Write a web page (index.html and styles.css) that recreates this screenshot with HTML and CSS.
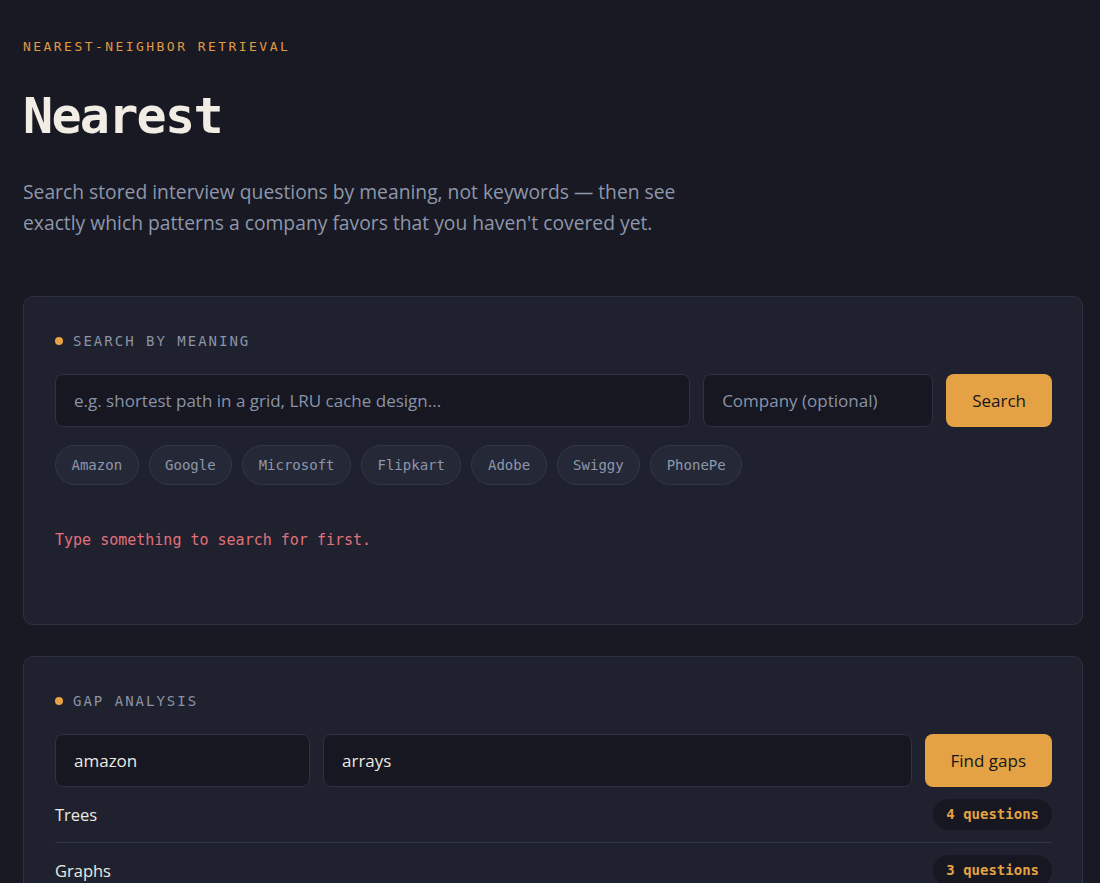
FILE: index.html
```html
<!DOCTYPE html>
<html lang="en">
<head>
    <meta charset="UTF-8">
    <meta name="viewport" content="width=device-width, initial-scale=1.0">
    <title>Nearest</title>
    <link rel="stylesheet" href="styles.css">
</head>
<body>

    <div class="page">
        <header class="hero">
            <p class="eyebrow">NEAREST-NEIGHBOR RETRIEVAL</p>
            <h1 class="title">Nearest</h1>
            <p class="lead">Search stored interview questions by meaning, not keywords — then see exactly which patterns a company favors that you haven't covered yet.</p>
        </header>

        <!-- Semantic search -->
        <section class="card">
            <h2 class="card-title"><span class="dot"></span>SEARCH BY MEANING</h2>
            <div class="search-row">
                <input type="text" class="field" placeholder="e.g. shortest path in a grid, LRU cache design...">
                <input type="text" class="field" placeholder="Company (optional)">
                <button class="btn">Search</button>
            </div>
            <div class="chips">
                <button class="chip">Amazon</button>
                <button class="chip">Google</button>
                <button class="chip">Microsoft</button>
                <button class="chip">Flipkart</button>
                <button class="chip">Adobe</button>
                <button class="chip">Swiggy</button>
                <button class="chip">PhonePe</button>
            </div>
            <div class="results">
                <p class="error">Type something to search for first.</p>
            </div>
        </section>

        <!-- Gap analysis -->
        <section class="card">
            <h2 class="card-title"><span class="dot"></span>GAP ANALYSIS</h2>
            <div class="gap-row">
                <input type="text" class="field" value="amazon">
                <input type="text" class="field" value="arrays">
                <button class="btn">Find gaps</button>
            </div>
            <ul class="gap-list">
                <li class="gap-item"><span>Trees</span><span class="count">4 questions</span></li>
                <li class="gap-item"><span>Graphs</span><span class="count">3 questions</span></li>
                <li class="gap-item"><span>Dynamic Programming</span><span class="count">3 questions</span></li>
            </ul>
        </section>
    </div>

</body>
</html>
```

FILE: styles.css
```css
body {
    margin: 0;
    padding: 0;
    background-color: #181922;
    color: #ece9e2;
    font-family: "Segoe UI", "Open Sans", sans-serif;
}

.page {
    padding: 37px 17px 40px 23px;
}

.eyebrow {
    margin: 0;
    font-family: "DejaVu Sans Mono", monospace;
    font-size: 13px;
    line-height: 20px;
    letter-spacing: 2.45px;
    color: #e09a45;
}

.title {
    margin: 29px 0 0;
    font-family: "DejaVu Sans Mono", monospace;
    font-size: 50px;
    line-height: 60px;
    letter-spacing: -1.7px;
    font-weight: bold;
    color: #f1ede4;
}

.lead {
    margin: 30px 0 0;
    max-width: 680px;
    font-size: 19.3px;
    line-height: 31px;
    color: #8e97ab;
}

.card {
    margin-top: 58px;
    padding: 34px 30px 31px 31px;
    background-color: #1f222e;
    border: 1px solid #2d3243;
    border-radius: 10px;
}

.card + .card {
    margin-top: 31px;
}

.card-title {
    display: flex;
    align-items: center;
    gap: 10px;
    margin: 0 0 23px;
    font-family: "DejaVu Sans Mono", monospace;
    font-size: 14px;
    line-height: 20px;
    font-weight: normal;
    letter-spacing: 2px;
    color: #8b93a7;
}

.dot {
    width: 8px;
    height: 8px;
    border-radius: 50%;
    background-color: #e8a444;
}

.search-row {
    display: grid;
    grid-template-columns: 1fr 230px auto;
    gap: 13px;
}

.gap-row {
    display: grid;
    grid-template-columns: 255px 1fr auto;
    gap: 13px;
}

.field {
    height: 53px;
    box-sizing: border-box;
    padding: 0 18px;
    background-color: #161720;
    border: 1px solid #2d3243;
    border-radius: 8px;
    font-family: inherit;
    font-size: 17px;
    color: #ece9e2;
    outline: none;
}

.field::placeholder {
    color: #8a93a8;
}

.btn {
    height: 53px;
    padding: 0 26px;
    background-color: #e5a244;
    color: #16161c;
    border: none;
    border-radius: 8px;
    font-family: inherit;
    font-size: 17px;
    cursor: pointer;
}

.chips {
    display: flex;
    flex-wrap: wrap;
    gap: 10px;
    margin-top: 18px;
}

.chip {
    height: 40px;
    padding: 0 15.5px;
    background-color: #252937;
    border: 1px solid #323748;
    border-radius: 20px;
    font-family: "DejaVu Sans Mono", monospace;
    font-size: 14px;
    color: #8d96aa;
    cursor: pointer;
}

.results {
    margin-top: 45px;
    min-height: 63px;
}

.error {
    margin: 0;
    font-family: "DejaVu Sans Mono", monospace;
    font-size: 15px;
    line-height: 20px;
    color: #e0707b;
}

.gap-list {
    list-style: none;
    margin: 0;
    padding: 0;
}

.gap-item {
    display: flex;
    justify-content: space-between;
    align-items: center;
    padding: 12px 0;
    border-bottom: 1px solid #30354a;
    font-size: 16.5px;
    color: #ece9e2;
}

.count {
    height: 31px;
    line-height: 31px;
    padding: 0 13px;
    border-radius: 16px;
    background-color: #161720;
    font-family: "DejaVu Sans Mono", monospace;
    font-size: 14px;
    font-weight: bold;
    color: #e5a244;
}
```
